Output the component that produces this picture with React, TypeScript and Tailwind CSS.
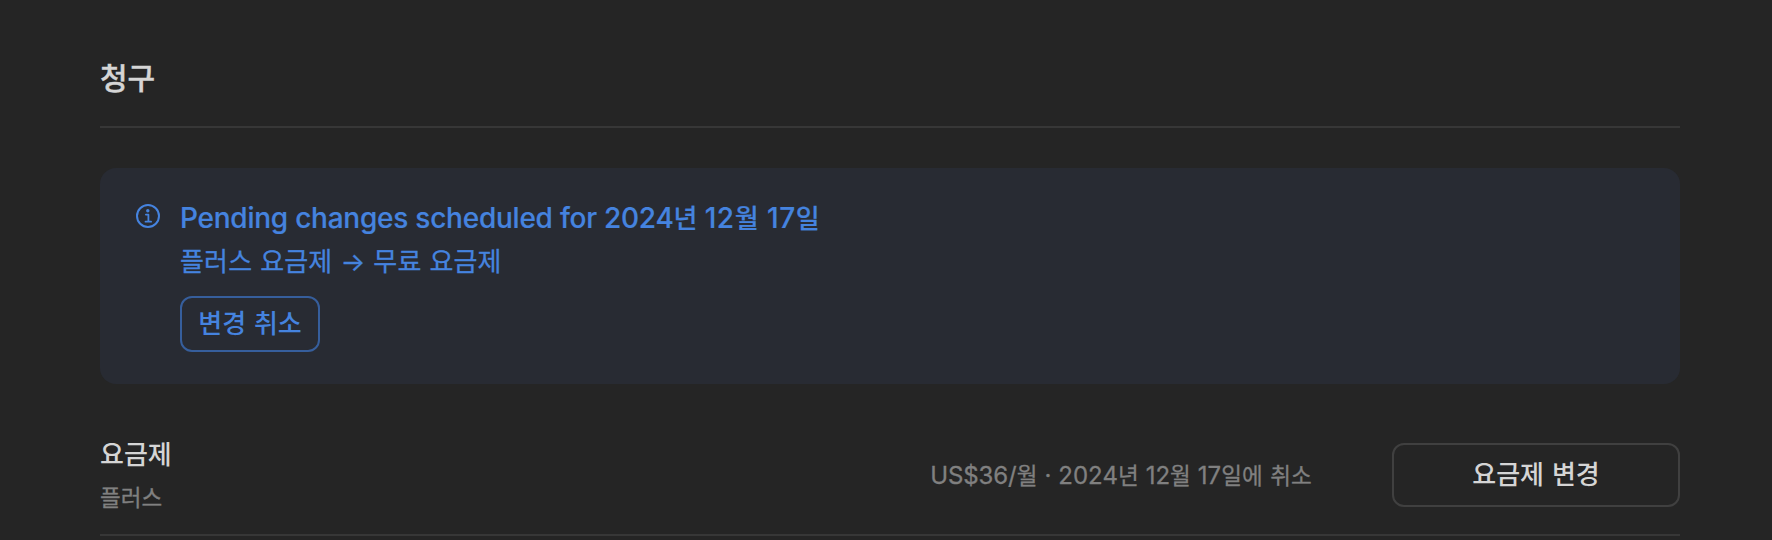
import type { ReactNode } from "react";

function Ko({ className = "", children }: { className?: string; children: ReactNode }) {
  return <span className={`font-['Noto_Sans_CJK_KR',sans-serif] ${className}`}>{children}</span>;
}

function InfoIcon() {
  return (
    <svg viewBox="0 0 24 24" className="mt-[35.5px] size-6 shrink-0" fill="none" stroke="#4583df">
      <circle cx="12" cy="12" r="11" strokeWidth="2" />
      <circle cx="11.8" cy="6.7" r="1.7" fill="#4583df" stroke="none" />
      <path d="M9.9 10.6h2.5v7M9.5 17.7h5.6" strokeWidth="1.8" strokeLinecap="round" strokeLinejoin="round" />
    </svg>
  );
}

function PendingNotice() {
  return (
    <section className="mt-10 flex h-[216px] rounded-2xl bg-[#282b33] pl-9 text-[#4583df]">
      <InfoIcon />
      <div className="ml-5 flex flex-col items-start pt-[26px]">
        <p className="h-11 whitespace-nowrap text-[28px] leading-[46px] font-medium tracking-[-0.24px] [-webkit-text-stroke:0.2px]">
          Pending changes scheduled for 2024<Ko className="text-[26px] tracking-normal">년</Ko>{" "}
          <span className="tracking-[0.5px]">
            12<Ko className="text-[26px]">월</Ko> 17<Ko className="text-[26px]">일</Ko>
          </span>
        </p>
        <p className="h-11 whitespace-nowrap text-[26px] leading-[44px] tracking-[0.15px] [-webkit-text-stroke:0.3px]">
          <Ko className="[word-spacing:2px]">플러스 요금제 </Ko>→<Ko className="[word-spacing:2px]"> 무료 요금제</Ko>
        </p>
        <button className="mt-[14px] flex h-14 w-[140px] items-center justify-center rounded-xl border-2 border-[#365e9c] pb-1 text-[26px] leading-none font-medium">
          <Ko className="[word-spacing:2px]">변경 취소</Ko>
        </button>
      </div>
    </section>
  );
}

function PlanRow() {
  return (
    <section className="mt-[47px] flex h-[105px] items-start border-b-2 border-[#373737]">
      <div className="flex-1">
        <h2 className="h-11 text-[26px] leading-[44px] font-medium text-[#d5d5d5]">
          <Ko>요금제</Ko>
        </h2>
        <p className="h-11 text-[22.5px] leading-[42px] text-[#808080] [-webkit-text-stroke:0.3px]">
          <Ko>플러스</Ko>
        </p>
      </div>
      <p className="mt-[21px] mr-20 text-[24px] leading-[44px] whitespace-nowrap text-[#808080] [word-spacing:0.3px] [-webkit-text-stroke:0.3px]">
        <span className="tracking-[-0.1px]">US$36/</span>
        <Ko className="text-[22.5px]">월</Ko> · 2024<Ko className="text-[22.5px]">년</Ko> 12
        <Ko className="text-[22.5px]">월</Ko> 17<Ko className="text-[22.5px] tracking-[0.2px] [word-spacing:2px]">일에 취소</Ko>
      </p>
      <button className="mt-3 flex h-16 w-72 items-center justify-center rounded-xl border-2 border-[#404040] pb-1 text-[26px] leading-none font-medium text-[#d5d5d5]">
        <Ko className="[word-spacing:2px]">요금제 변경</Ko>
      </button>
    </section>
  );
}

export default function App() {
  return (
    <main className="h-[540px] overflow-hidden bg-[#252525] pr-[92px] pl-[100px] font-['Inter','Noto_Sans_CJK_KR',sans-serif]">
      <header className="h-32 border-b-2 border-[#373737] pt-[54px]">
        <h1 className="text-[30px] leading-[44px] font-medium text-[#d5d5d5] [-webkit-text-stroke:0.4px]">
          <Ko>청구</Ko>
        </h1>
      </header>
      <PendingNotice />
      <PlanRow />
    </main>
  );
}
